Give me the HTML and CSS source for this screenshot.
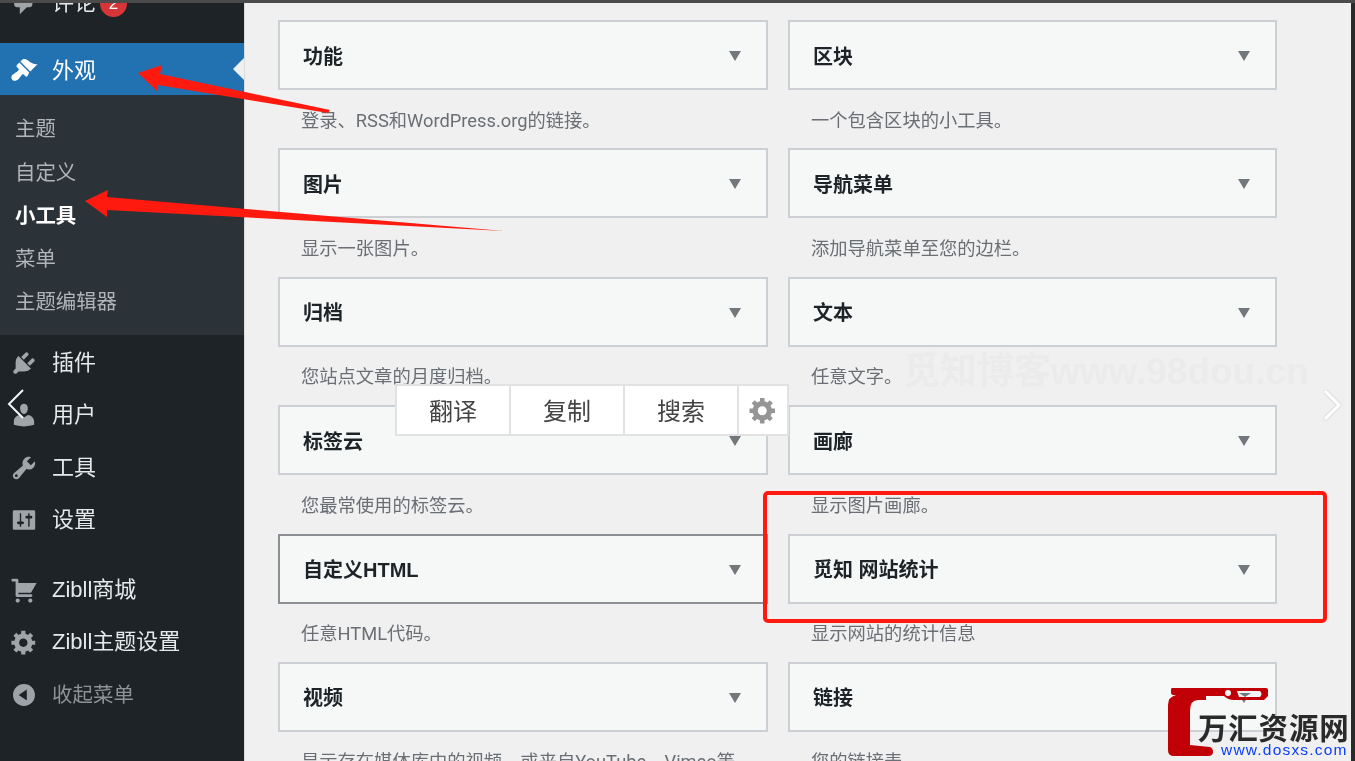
FILE: index.html
```html
<!DOCTYPE html>
<html lang="zh-CN">
<head>
<meta charset="utf-8">
<title>小工具</title>
<link rel="stylesheet" href="styles.css">
</head>
<body>
<div class="page">
  <div class="top-strip"></div>
  <div class="body-row">
    <aside class="sidebar">
      <div class="menu-item comments">
        <svg class="icon" viewBox="0 0 20 20"><path d="M5 2h9c1.1 0 2 .9 2 2v7c0 1.1-.9 2-2 2h-2l-5 5v-5H5c-1.100 0-2-.9-2-2V4c0-1.100.9-2 2-2z"/></svg>
        <span>评论</span><span class="badge">2</span>
      </div>
      <div class="menu-item active">
        <svg class="icon" viewBox="0 0 20 20"><path d="M14.48 11.06L7.41 3.99l1.5-1.5c.5-.56 2.3-.47 3.51.32 1.21.8 1.43 1.28 2.91 2.1 1.18.64 2.45 1.26 4.45.85zm-.71.71L6.7 4.7 4.93 6.47c-.39.39-.39 1.02 0 1.41l1.06 1.06c.39.39.39 1.03 0 1.42-.6.6-1.43 1.11-2.21 1.69-.35.26-.7.53-1.01.84C1.43 13.23.4 14.96 1.4 16.65c.99 1.69 3.46 1.12 4.61-.03.31-.31.58-.66.84-1.01.58-.78 1.09-1.61 1.69-2.21.39-.39 1.03-.39 1.42 0l1.06 1.06c.39.39 1.02.39 1.41 0z"/></svg>
        <span>外观</span>
      </div>
      <ul class="submenu">
        <li>主题</li>
        <li>自定义</li>
        <li class="current">小工具</li>
        <li>菜单</li>
        <li>主题编辑器</li>
      </ul>
      <div class="menu-item group-first">
        <svg class="icon" viewBox="0 0 20 20"><path d="M13.11 4.36L9.87 7.6 8 5.73l3.24-3.24c.35-.34 1.05-.2 1.56.32.52.51.66 1.21.31 1.55zm-8 1.77l.91-1.12 9.01 9.01-1.19.84c-.71.71-2.63 1.16-3.82 1.16H6.14L4.9 17.26c-.59.59-1.54.59-2.12 0-.59-.58-.59-1.53 0-2.12l1.24-1.24v-3.88c0-1.13.4-3.19 1.09-3.89zm7.26 3.97l3.24-3.24c.34-.35 1.04-.21 1.55.31.52.51.66 1.21.31 1.55l-3.24 3.25z"/></svg>
        <span>插件</span>
      </div>
      <div class="menu-item">
        <svg class="icon" viewBox="0 0 20 20"><path d="M10 9.25c-2.27 0-2.73-3.44-2.73-3.44C7 4.02 7.82 2 9.97 2c2.16 0 2.98 2.02 2.71 3.81 0 0-.41 3.44-2.68 3.44zm0 2.57L12.720 10c2.390 0 4.520 2.330 4.520 4.530v2.490s-3.650 1.130-7.240 1.130c-3.650 0-7.240-1.130-7.240-1.130v-2.490c0-2.250 1.940-4.480 4.470-4.480z"/></svg>
        <span>用户</span>
      </div>
      <div class="menu-item">
        <svg class="icon" viewBox="0 0 20 20"><path d="M16.680 9.770c-1.340 1.340-3.300 1.670-4.950.99l-5.410 6.520c-.99.99-2.590.99-3.580 0s-.99-2.590 0-3.570l6.520-5.420c-.68-1.650-.35-3.610.99-4.950 1.280-1.280 3.120-1.620 4.720-1.060l-2.890 2.890 2.820 2.820 2.860-2.870c.53 1.580.18 3.390-1.080 4.650zM3.810 16.210c.4.39 1.040.39 1.430 0 .4-.4.4-1.040 0-1.430-.39-.4-1.030-.4-1.430 0-.39.39-.39 1.030 0 1.430z"/></svg>
        <span>工具</span>
      </div>
      <div class="menu-item">
        <svg class="icon" viewBox="0 0 20 20"><path d="M18 16V4c0-.55-.45-1-1-1H3c-.55 0-1 .45-1 1v12c0 .55.45 1 1 1h14c.55 0 1-.45 1-1zM8 11h1c.55 0 1 .45 1 1s-.45 1-1 1H8v1.500c0 .28-.22.5-.5.5s-.5-.22-.5-.5V13H6c-.55 0-1-.45-1-1s.45-1 1-1h1V5.500c0-.28.22-.5.5-.5s.5.22.5.5V11zm5-2h-1c-.55 0-1-.45-1-1s.45-1 1-1h1V5.500c0-.28.22-.5.5-.5s.5.22.5.5V7h1c.55 0 1 .45 1 1s-.45 1-1 1h-1v5.500c0 .28-.22.5-.5.5s-.5-.22-.5-.5V9z"/></svg>
        <span>设置</span>
      </div>
      <div class="menu-item group-start">
        <svg class="icon" viewBox="0 0 20 20"><path d="M6 13h9c.55 0 1 .45 1 1s-.45 1-1 1H5c-.55 0-1-.45-1-1V4H2c-.55 0-1-.45-1-1s.45-1 1-1h3c.55 0 1 .45 1 1v2h13l-4 7H6v1zm-.5 3c.83 0 1.500.67 1.500 1.500S6.330 19 5.500 19 4 18.330 4 17.500 4.670 16 5.500 16zm9 0c.83 0 1.500.67 1.500 1.500s-.67 1.500-1.500 1.500-1.500-.67-1.500-1.500.67-1.500 1.500-1.500z"/></svg>
        <span>Zibll商城</span>
      </div>
      <div class="menu-item">
        <svg class="icon" viewBox="0 0 20 20"><path fill-rule="evenodd" d="M18 12h-2.180c-.17.7-.44 1.350-.81 1.930l1.540 1.540-2.100 2.100-1.540-1.540c-.58.36-1.230.63-1.910.79V19H8v-2.180c-.68-.16-1.330-.43-1.910-.79l-1.540 1.540-2.120-2.120 1.540-1.540c-.36-.58-.63-1.230-.79-1.910H1V9.030h2.170c.16-.7.44-1.350.8-1.940L2.430 5.550l2.100-2.100 1.540 1.540c.58-.37 1.240-.64 1.930-.81V2h3v2.180c.68.16 1.330.43 1.910.79l1.540-1.540 2.120 2.120-1.540 1.540c.36.59.64 1.240.8 1.940H18V12zm-8.500 1.500c1.660 0 3-1.340 3-3s-1.340-3-3-3-3 1.340-3 3 1.340 3 3 3z"/></svg>
        <span>Zibll主题设置</span>
      </div>
      <div class="menu-item collapse">
        <svg class="icon" viewBox="0 0 20 20"><path fill-rule="evenodd" d="M10 2.160c4.330 0 7.840 3.510 7.840 7.840s-3.510 7.840-7.840 7.840S2.160 14.330 2.160 10 5.710 2.160 10 2.160zm2 11.720V6.120L6.180 9.970z"/></svg>
        <span>收起菜单</span>
      </div>
    </aside>

    <main class="content">
      <section class="widgets">
        <div class="widget"><div class="card"><h3>功能</h3><i class="caret"></i></div><p>登录、RSS和WordPress.org的链接。</p></div>
        <div class="widget"><div class="card"><h3>区块</h3><i class="caret"></i></div><p>一个包含区块的小工具。</p></div>
        <div class="widget"><div class="card"><h3>图片</h3><i class="caret"></i></div><p>显示一张图片。</p></div>
        <div class="widget"><div class="card"><h3>导航菜单</h3><i class="caret"></i></div><p>添加导航菜单至您的边栏。</p></div>
        <div class="widget"><div class="card"><h3>归档</h3><i class="caret"></i></div><p>您站点文章的月度归档。</p></div>
        <div class="widget"><div class="card"><h3>文本</h3><i class="caret"></i></div><p>任意文字。</p></div>
        <div class="widget"><div class="card"><h3>标签云</h3><i class="caret"></i></div><p>您最常使用的标签云。</p></div>
        <div class="widget"><div class="card"><h3>画廊</h3><i class="caret"></i></div><p>显示图片画廊。</p></div>
        <div class="widget"><div class="card focused"><h3>自定义HTML</h3><i class="caret"></i></div><p>任意HTML代码。</p></div>
        <div class="widget"><div class="card"><h3>觅知 网站统计</h3><i class="caret"></i></div><p>显示网站的统计信息</p></div>
        <div class="widget"><div class="card"><h3>视频</h3><i class="caret"></i></div><p>显示存在媒体库中的视频，或来自YouTube、Vimeo等</p></div>
        <div class="widget"><div class="card"><h3>链接</h3><i class="caret"></i></div><p>您的链接表</p></div>
      </section>
    </main>
    <div class="right-strip"></div>
  </div>

  <div class="watermark">觅知博客www.98dou.cn</div>

  <div class="highlight"></div>

  <div class="toolbar">
    <span class="tool">翻译</span>
    <span class="tool">复制</span>
    <span class="tool">搜索</span>
    <span class="tool gear">
      <svg viewBox="0 0 20 20"><path fill-rule="evenodd" d="M18 12h-2.180c-.17.7-.44 1.350-.81 1.930l1.540 1.540-2.100 2.100-1.540-1.540c-.58.36-1.230.63-1.910.79V19H8v-2.180c-.68-.16-1.330-.43-1.910-.79l-1.540 1.540-2.120-2.120 1.540-1.540c-.36-.58-.63-1.230-.79-1.910H1V9.030h2.170c.16-.7.44-1.350.8-1.940L2.430 5.550l2.100-2.100 1.540 1.540c.58-.37 1.240-.64 1.930-.81V2h3v2.180c.68.16 1.330.43 1.910.79l1.540-1.540 2.120 2.120-1.540 1.540c.36.59.64 1.240.8 1.940H18V12zm-8.500 1.500c1.660 0 3-1.340 3-3s-1.340-3-3-3-3 1.340-3 3 1.340 3 3 3z"/></svg>
    </span>
  </div>

  <svg class="annotations" viewBox="0 0 1355 761">
    <polygon class="arrow" points="138,73 162,65 160,74 330,110 328,113 158,85 157,91"/>
    <polygon class="arrow" points="85,201 108,190 107,197 504,231 107,210 107,217"/>
    <polyline class="chev" points="23,390 9,404 23,418"/>
    <polyline class="chev chev-right" points="1325,391 1339,405 1325,419"/>
  </svg>

  <div class="logo">
    <svg class="logo-mark" viewBox="0 0 100 70">
      <path class="logo-red" d="M4 1H98Q100 1 100 3V9L96 13H66Q60 13 56 9H38V13H30Q22 13 22 24V58L42 60Q45 61 45 65Q45 69 40 69H6Q0 69 0 63V18Q0 10 8 8H5Q3 8 3 5V3Q3 1 4 1Z"/>
      <circle class="logo-white" cx="60" cy="6" r="3"/>
      <path class="logo-white" d="M69 4H92Q95 7 92 10H71Z"/>
      <path class="logo-grey" d="M71 6H83L77 10Z"/>
    </svg>
    <span class="logo-title">万汇资源网</span>
    <span class="logo-url">www.dosxs.com</span>
  </div>
</div>
</body>
</html>
```
FILE: styles.css
```css
* { box-sizing: border-box; }
html, body { margin: 0; padding: 0; height: 100%; overflow: hidden; }
body { font-family: "Liberation Sans", "Noto Sans CJK SC", sans-serif; background: #f0f0f0; }

.page { position: relative; width: 1355px; height: 761px; overflow: hidden; display: flex; flex-direction: column; filter: blur(.4px); }
.top-strip { height: 3px; background: #4b4b4b; flex: none; }
.body-row { flex: 1; display: flex; min-height: 0; }

/* sidebar */
.sidebar { width: 244px; flex: none; background: #1d2327; overflow: hidden; color: #e6e8e9; }
.menu-item { position: relative; height: 52.400px; display: flex; align-items: center; padding-left: 52px; font-size: 22px; line-height: 1; }
.menu-item .icon { position: absolute; left: 10px; top: 12px; width: 28px; height: 28px; fill: #a0a5aa; }
.comments { margin-top: -26px; }
.badge { margin-left: 4px; width: 27px; height: 27px; border-radius: 50%; background: #d63638; color: #fff; font-size: 17px; display: flex; align-items: center; justify-content: center; }
.active { margin-top: 14px; padding-top: 3px; background: #2271b1; color: #fff; height: 52px; }
.active .icon { fill: #fff; top: 13px; }
.active::after { content: ""; position: absolute; right: 0; top: 15px; border: 11px solid transparent; border-right-color: #f0f0f0; border-left-width: 0; }
.submenu { list-style: none; margin: 0; padding: 10.500px 0 13.500px; background: #2c3338; color: #b0b5b9; font-size: 20.400px; }
.submenu li { height: 43.200px; padding-left: 15px; display: flex; align-items: center; }
.submenu .current { color: #fff; font-weight: 700; }
.group-first { margin-top: 1.500px; }
.group-start { margin-top: 17.500px; }
.collapse { color: #8d9296; font-size: 20.500px; }
.collapse .icon { fill: #9ea3a8; }

/* content */
.content { flex: 1; min-width: 0; background: #f0f0f0; border-left: 1px solid #d9dadb; padding: 17px 0 0 33px; }
.widgets { display: grid; grid-template-columns: 490px 489px; column-gap: 20px; grid-auto-rows: 128.400px; }
.card { position: relative; height: 70px; background: #f6f7f7; border: 2px solid #ccd0d4; padding: 3px 0 0 23px; display: flex; align-items: center; }
.card h3 { margin: 0; font-size: 20px; font-weight: 700; color: #1d2327; line-height: 1; }
.card.focused { border-color: #8c8f94; }
.caret { position: absolute; right: 25.500px; top: 29px; border-style: solid; border-width: 10px 6.500px 0; border-color: #72777c transparent transparent; }
.widget p { margin: 0; padding: 18.500px 0 0 23px; font-family: Roboto, "Noto Sans CJK SC", sans-serif; font-size: 18.300px; line-height: 24px; color: #6a6f75; white-space: nowrap; overflow: hidden; }
.right-strip { width: 4px; flex: none; background: #2a2a2a; }

/* overlays */
.watermark { position: absolute; left: 903px; top: 350px; font-size: 37px; line-height: 44px; font-weight: 700; color: #ebebeb; white-space: nowrap; }
.highlight { position: absolute; left: 763px; top: 491px; width: 564px; height: 132px; border: 4px solid #ff1a10; border-radius: 5px; }
.toolbar { position: absolute; left: 395px; top: 384px; height: 52px; display: flex; background: #fff; border: 2px solid #e2e2e2; }
.tool { width: 114px; padding-bottom: 2px; display: flex; align-items: center; justify-content: center; font-size: 24px; color: #444; border-right: 2px solid #e2e2e2; }
.gear { width: 48px; padding-bottom: 0; border-right: 0; }
.gear svg { width: 30px; height: 30px; fill: #959595; }
.annotations { position: absolute; left: 0; top: 0; width: 1355px; height: 761px; pointer-events: none; }
.arrow { fill: #ff1a10; }
.chev { fill: none; stroke: #f4f4f4; stroke-width: 2; }
.chev-right { stroke: #fff; stroke-width: 3; filter: drop-shadow(0 0 1px rgba(0, 0, 0, .18)); }

.logo { position: absolute; left: 1168px; top: 686px; width: 184px; height: 72px; }
.logo-mark { position: absolute; left: 0; top: 1px; width: 100px; height: 70px; }
.logo-red { fill: #c00006; }
.logo-white { fill: #f4f4f4; }
.logo-grey { fill: #72777c; }
.logo-title { position: absolute; left: 30px; top: 26px; font-family: "Noto Sans CJK SC", sans-serif; font-size: 29.500px; line-height: 28px; font-weight: 700; letter-spacing: .8px; color: #2a2a2a; white-space: nowrap; }
.logo-url { position: absolute; left: 53px; top: 56px; font-size: 15.500px; line-height: 15px; letter-spacing: 1.2px; color: #0a3cff; white-space: nowrap; }
```
